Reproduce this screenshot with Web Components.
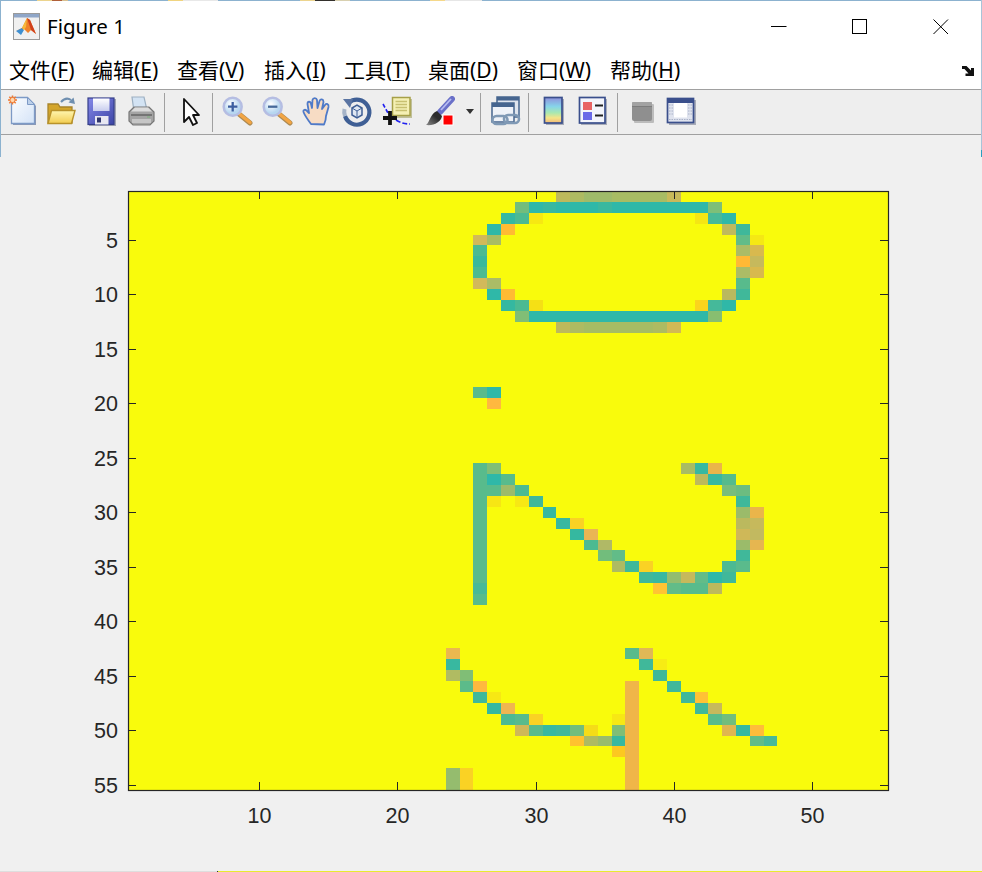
<!DOCTYPE html>
<html lang="zh"><head><meta charset="utf-8"><title>Figure 1</title>
<style>html,body{margin:0;padding:0;overflow:hidden;background:#f0f0f0}</style></head>
<body>
<fig-window>
  <title-bar slot="head">Figure 1</title-bar>
  <menu-bar slot="head">
    <menu-item label="文件" key="F" w="83"></menu-item>
    <menu-item label="编辑" key="E" w="85"></menu-item>
    <menu-item label="查看" key="V" w="87"></menu-item>
    <menu-item label="插入" key="I" w="80"></menu-item>
    <menu-item label="工具" key="T" w="84"></menu-item>
    <menu-item label="桌面" key="D" w="89"></menu-item>
    <menu-item label="窗口" key="W" w="93"></menu-item>
    <menu-item label="帮助" key="H" w="71"></menu-item>
  </menu-bar>
  <tool-bar slot="head"></tool-bar>
  <fig-axes></fig-axes>
</fig-window>
<script>
const BLUE='#8cb2cf';
class FigWindow extends HTMLElement{constructor(){super();this.attachShadow({mode:'open'}).innerHTML=`<style>
:host{display:flex;flex-direction:column;width:982px;height:872px;position:relative;overflow:hidden;background:#f0f0f0}
.top{height:1px;flex:none;background:linear-gradient(90deg,${BLUE} 0 37px,#ecd48e 37px 52px,#b0603a 52px 62px,#d8c090 62px 68px,${BLUE} 68px 168px,#f0d480 168px 183px,#e8e8e8 183px 218px,${BLUE} 218px 300px,#ecd48e 300px 315px,#33302c 315px 335px,#d8d0b0 335px 350px,${BLUE} 350px 430px,#f5d88a 430px 445px,#e6e6e6 445px 482px,${BLUE} 482px)}
.bottom{height:1px;flex:none;background:linear-gradient(90deg,#dedede 0 217px,#333 217px 218px,#e9ea30 218px)}
main{flex:1;min-height:0;display:flex}
.l,.r{position:absolute;width:1px;top:0;height:157px;background:${BLUE}}.l{left:0}.r{right:0;background:linear-gradient(180deg,#a8c4d8 0 150px,#2a9fc0 150px)}
</style><div class="top"></div><slot name="head"></slot><main><slot></slot></main><div class="bottom"></div><div class="l"></div><div class="r"></div>`}}
customElements.define('fig-window',FigWindow);

class TitleBar extends HTMLElement{constructor(){super();this.attachShadow({mode:'open'}).innerHTML=`<style>
:host{display:flex;align-items:center;height:51px;flex:none;padding-right:1px;background:#fff;color:#000;font:20.5px "Noto Sans","Noto Sans CJK SC",sans-serif}
.ic{margin:0 7px 0 13px;width:27px;height:27px;flex:none}
.t{flex:1;position:relative;top:-1px}
.b{width:81px;height:51px;display:flex;align-items:center;justify-content:center;flex:none}
</style>
<svg class="ic" viewBox="0 0 27 27"><rect x=".5" y=".5" width="26" height="26" fill="#f0f0f0" stroke="#9a9a9a"/><rect x="1" y="1" width="25" height="3.5" fill="#8fa6c8"/>
<path d="M3 18l6-3 5-10 3 2 6 14-5-4-3 3-4-4z" fill="#f0822a"/><path d="M14 5l3 2 6 14-5-4z" fill="#d0401e"/><path d="M3 18l6-3 2 2-3 5z" fill="#3f8fd0"/><path d="M9 15l5-10-1 9-2 3z" fill="#f5b83a"/></svg>
<span class="t"><slot></slot></span>
<span class="b"><svg width="16" height="16"><path d="M0 7.5h15.5" stroke="#000"/></svg></span>
<span class="b"><svg width="16" height="16"><rect x=".5" y=".5" width="14" height="14" fill="none" stroke="#000"/></svg></span>
<span class="b"><svg width="16" height="16"><path d="M.5.5l14.5 14.5M15 .5L.5 15" stroke="#000" stroke-width="1"/></svg></span>`}}
customElements.define('title-bar',TitleBar);

class MenuBar extends HTMLElement{constructor(){super();this.attachShadow({mode:'open'}).innerHTML=`<style>
:host{display:flex;align-items:center;height:37px;flex:none;background:#fff;border-bottom:1px solid #a0a0a0;padding-left:9px;color:#000;font:21px "Noto Sans","Noto Sans CJK SC",sans-serif}
.m{display:flex;flex:1}
svg{margin:0 7px 0 0;flex:none}
</style><div class="m"><slot></slot></div>
<svg width="14" height="12" viewBox="0 0 14 12"><path d="M1 1H5.500L10 5.500V3H13V11H4.500V8.500H7.500L3.500 4H1Z" fill="#111"/></svg>`}}
customElements.define('menu-bar',MenuBar);

class MenuItem extends HTMLElement{constructor(){super();const l=this.getAttribute('label'),k=this.getAttribute('key'),w=this.getAttribute('w');this.attachShadow({mode:'open'}).innerHTML=`<style>:host{display:block;flex:none;width:${w}px;white-space:nowrap;line-height:37px}u{text-underline-offset:2px;text-decoration-thickness:1px}</style>${l}(<u>${k}</u>)`}}
customElements.define('menu-item',MenuItem);

const defs=`<defs>
<linearGradient id="pg" x1="0" y1="0" x2="1" y2="1"><stop offset="0" stop-color="#fbfdff"/><stop offset="1" stop-color="#d4e3f7"/></linearGradient>
<linearGradient id="fg" x1="0" y1="0" x2="0" y2="1"><stop offset="0" stop-color="#fff6b0"/><stop offset="1" stop-color="#f2cc50"/></linearGradient>
<linearGradient id="dg" x1="0" y1="0" x2="1" y2="1"><stop offset="0" stop-color="#8487e8"/><stop offset="1" stop-color="#3c45a6"/></linearGradient>
<linearGradient id="lg" x1="0" y1="0" x2="0" y2="1"><stop offset="0" stop-color="#fff"/><stop offset="1" stop-color="#c8cdee"/></linearGradient>
<radialGradient id="gl" cx=".4" cy=".35"><stop offset="0" stop-color="#fff"/><stop offset="1" stop-color="#b6d6f0"/></radialGradient>
<linearGradient id="cb" x1="0" y1="0" x2="0" y2="1"><stop offset="0" stop-color="#8f90dc"/><stop offset=".35" stop-color="#86d4ea"/><stop offset=".6" stop-color="#a8e8b0"/><stop offset=".8" stop-color="#f5e488"/><stop offset="1" stop-color="#f0b878"/></linearGradient>
<linearGradient id="br" x1="0" y1="1" x2="1" y2="0"><stop offset="0" stop-color="#8a8a8a"/><stop offset=".6" stop-color="#2c2c2c"/></linearGradient>
</defs>`;
const ICONS={
new:`<path d="M11 9H27L34 16V35H11Z" fill="#8c98b4"/><path d="M9.5 7.5H25.5L32.5 14.5V33.5H9.5Z" fill="url(#pg)" stroke="#7d9ac6" stroke-width="1.3"/><path d="M25.5 7.5V14.5H32.5Z" fill="#bcd0ea" stroke="#7d9ac6"/><path d="M10.5 5.5v9M6 10h9M7.3 6.8l6.4 6.4M13.7 6.8l-6.4 6.4" stroke="#ef7a32" stroke-width="1.5"/><circle cx="10.5" cy="10" r="2.6" fill="#ffd9b0" stroke="#ef7a32"/>`,
open:`<path d="M6 33V14h10l2 3h12v16z" fill="#d4a52a" stroke="#a8842a" stroke-width="1.3"/><path d="M6 33.5L9.5 20.5H33L29.5 33.5Z" fill="url(#fg)" stroke="#b8922a" stroke-width="1.4"/><path d="M19 12Q24 6.500 29 10" fill="none" stroke="#6f8fb0" stroke-width="2"/><path d="M26.500 12.500L33 14L31.500 7.500Z" fill="#6f8fb0"/>`,
save:`<rect x="7" y="9" width="27" height="27" fill="#a2a6b4"/><rect x="6" y="8" width="26" height="26.500" fill="url(#dg)" stroke="#353f8a" stroke-width="1.200"/><rect x="11" y="8.500" width="16.500" height="12.500" fill="url(#lg)"/><rect x="13" y="26" width="13.500" height="8.500" fill="#e8e8f2"/><rect x="15" y="27.500" width="4" height="5" fill="#2f356c"/>`,
print:`<path d="M10 7H22L24.500 18H11.500Z" fill="#d3e3f3" stroke="#9db0c2" stroke-width="1.200"/><path d="M7 22L12 17H27L32 22V31L28 35H11L7 31Z" fill="#a4a4a4" stroke="#787878" stroke-width="1.200"/><path d="M9 21.500L13 17.500H26L30 21.500Z" fill="#dcdcdc"/><path d="M9 25H30" stroke="#666" stroke-width="1.500"/><path d="M10 29H29V33H10Z" fill="#c6c6c6"/><path d="M25 27h3" stroke="#7bb07b"/>`,
arrow:`<path d="M13 9L13 32L18 27L22 35L26 33L22 25L28 25Z" fill="#fff" stroke="#111" stroke-width="1.800" stroke-linejoin="round"/>`,
zin:`<path d="M22 24L33 33" stroke="#ad8a52" stroke-width="5" stroke-linecap="round"/><path d="M22.500 24L33 32.500" stroke="#f2a544" stroke-width="3.500" stroke-linecap="round"/><circle cx="15.700" cy="16.700" r="9" fill="url(#gl)" stroke="#b5bde2" stroke-width="2.500"/><path d="M11 16.700h9.400M15.700 12v9.400" stroke="#3c5fa0" stroke-width="2.300"/>`,
zout:`<path d="M22 24L33 33" stroke="#ad8a52" stroke-width="5" stroke-linecap="round"/><path d="M22.500 24L33 32.500" stroke="#f2a544" stroke-width="3.500" stroke-linecap="round"/><circle cx="15.700" cy="16.700" r="9" fill="url(#gl)" stroke="#b5bde2" stroke-width="2.500"/><path d="M11 16.700h9.400" stroke="#466a9a" stroke-width="2.300"/>`,
hand:`<path d="M14 34C11 30 8 26 6.500 22C6 19.500 8.500 19 10 21L12 23L10.500 14C10.500 11 13.500 11 14 14L15 18L15.500 10C16 7.500 19.500 7.500 20 10L20.500 18L22.500 11C23.500 8.500 26.500 9 26.500 12L25 19L28 15C29.500 13 32 14 31.500 17L29 26C29 30 28 32 27 34.500Z" fill="#f7dcc4" stroke="#4f7ac8" stroke-width="1.800" stroke-linejoin="round"/>`,
rotate:`<path d="M12 12.500A12.500 12.500 0 1 1 8 26" fill="none" stroke="#3f5f95" stroke-width="4.200"/><path d="M8 26A12.500 12.500 0 0 1 7.500 19" fill="none" stroke="#a6b4c8" stroke-width="4"/><path d="M6 9L16 9L13 18Z" fill="#5a74a2"/><path d="M15 18L20 15L25 18V25L20 28L15 25Z" fill="#dfe7f2" stroke="#3f5f95" stroke-width="1.500"/><path d="M15 18L20 21L25 18M20 21V28" fill="none" stroke="#3f5f95" stroke-width="1"/>`,
cursor:`<rect x="17" y="9" width="18" height="19" fill="#c0c09a"/><rect x="15.500" y="7.500" width="17.500" height="18" fill="#f5f0b4" stroke="#a6a048" stroke-width="1.500"/><path d="M18.500 11.500h11.500M18.500 14.500h11.500M18.500 17.500h11.500M18.500 20.500h11.500" stroke="#c8c070" stroke-width="1.300"/><path d="M6 14L11 23" stroke="#2222f0" stroke-width="1.600" stroke-dasharray="4 2"/><path d="M19 30Q25 34 33 34" fill="none" stroke="#2222f0" stroke-width="1.600" stroke-dasharray="5 2"/><path d="M13 21v14M6 28h14" stroke="#111" stroke-width="3.800"/>`,
brush:`<path d="M35 9L23 22" stroke="#6a70c8" stroke-width="6" stroke-linecap="round"/><path d="M34 9L24 20" stroke="#b6bcf2" stroke-width="1.800"/><path d="M20 21L25 26C24 32 17 36 9 35C13 32 13 24 20 21Z" fill="url(#br)"/><rect x="26" y="25" width="10" height="10" fill="#f00" stroke="#fff"/>`,
link:`<rect x="8" y="7" width="22" height="20" fill="#dfe5ee" stroke="#46658f" stroke-width="1.500"/><rect x="8" y="7" width="22" height="3.500" fill="#46658f"/><rect x="3" y="13" width="22" height="19" fill="#eef2f8" stroke="#46658f" stroke-width="1.500"/><rect x="3" y="13" width="22" height="4" fill="#46658f"/><rect x="3.500" y="26" width="15" height="8" rx="4" fill="none" stroke="#7f99b5" stroke-width="2.600"/><rect x="15" y="25" width="15" height="8" rx="4" fill="none" stroke="#7f99b5" stroke-width="2.600"/>`,
cbar:`<rect x="12" y="9" width="18" height="26" fill="#a8acb8"/><rect x="10.500" y="7.500" width="17.500" height="25.500" fill="url(#cb)" stroke="#3a4f8c" stroke-width="1.700"/>`,
legend:`<rect x="7" y="9" width="26" height="26" fill="#a8acb8"/><rect x="5.500" y="7.500" width="25.500" height="25.500" fill="#f3f5fb" stroke="#3a4f8c" stroke-width="1.700"/><rect x="9" y="12" width="9" height="8" fill="#e86464"/><rect x="9" y="22" width="9" height="8" fill="#6a6ae8"/><path d="M21 15.500h8M21 25.500h8" stroke="#222" stroke-width="1.800"/>`,
hide:`<rect x="12" y="14" width="20" height="19" rx="1" fill="#bcbcbc"/><rect x="10" y="12" width="20" height="19" rx="2" fill="#8f8f8f"/><rect x="10" y="12" width="20" height="4" rx="1" fill="#a2a2a2"/><path d="M10 16.500h20" stroke="#7c7c7c"/>`,
show:`<rect x="7" y="10" width="27" height="25" fill="#a8acb8"/><rect x="5.500" y="8.500" width="26" height="24" fill="#dfe3ee" stroke="#3a4f8c" stroke-width="1.700"/><rect x="5.500" y="8.500" width="26" height="4.500" fill="#3a4f8c"/><rect x="12" y="13" width="13" height="14.500" fill="#fff"/><path d="M7 15h4M7 18h4M7 21h4M7 24h4M26 15h4M26 18h4M26 21h4M26 24h4M7 29.500h23" stroke="#aab2c8" stroke-dasharray="1.500 1"/>`
};
class ToolBar extends HTMLElement{constructor(){super();
const seq=[['new',40],['open',40],['save',40],['print',40],'s2,6',['arrow',40],'s1,4',['zin',40],['zout',40],['hand',40],['rotate',40],['cursor',40],['brush',40],'d','s0,8',['link',39],'s0,5',['cbar',40],['legend',40],'s3,4',['hide',40],['show',40]];
let h='';for(const it of seq){
 if(Array.isArray(it))h+=`<svg class="i" width="${it[1]}" height="44" viewBox="0 0 ${it[1]} 44">${ICONS[it[0]]}</svg>`;
 else if(it==='d')h+=`<svg class="i d" width="23" height="44" viewBox="0 0 23 44"><path d="M9 19h8l-4 5z" fill="#333"/></svg>`;
 else{const[a,b]=it.slice(1).split(',');h+=`<span class="s" style="margin:0 ${b}px 0 ${a}px"></span>`}
}
this.attachShadow({mode:'open'}).innerHTML=`<style>
:host{display:flex;align-items:center;height:44px;flex:none;padding-left:2px;background:#eee;border-bottom:1px solid #a0a0a0}
.i{flex:none;display:block;filter:blur(.45px)}.d{filter:none}
.s{flex:none;width:1px;height:39px;background:#a0a0a0}
.defs{position:absolute;width:0;height:0}
</style><svg class="defs">${defs}</svg>${h}`}}
customElements.define('tool-bar',ToolBar);

const T='#2fb8a8',K='#58bb8c';
/* row: [column,colour,...] */
const CELLS={
1:[32,'#bdb95c',33,'#aebb62',34,'#9fbb6a',35,'#9fbb6a',36,'#a8bc64',37,'#a8bc64',38,'#a8bc64',39,'#a8bc64',40,'#c8b95a'],
2:[29,'#72bd7c',30,T,31,'#38b8a0',32,T,33,T,34,T,35,'#3ab89f',36,T,37,T,38,T,39,T,40,T,41,T,42,T,43,'#7dbf78'],
3:[28,'#35b8a0',29,'#4cba92',30,'#f7e812',42,'#f5e614',43,'#48b998',44,T],
4:[27,T,28,'#ffbb33',44,'#bfba5c',45,'#3fb89a'],
5:[26,'#d2b95a',27,'#a8bc64',45,'#62bc88',46,'#f5e814'],
6:[26,'#4cba92',45,'#abbc66',46,'#d8b94e'],
7:[26,'#3bb89c',45,'#ffb935',46,'#c6b95c'],
8:[26,'#4cba92',45,'#abbc66',46,'#d8b94e'],
9:[26,'#d2b95a',27,'#abbc66',45,K],
10:[27,T,28,'#ffbb33',44,'#bab95e',45,'#40b89a'],
11:[28,'#35b8a0',29,'#4cba92',30,'#f5e015',42,'#fbd41d',43,'#45b99a',44,T],
12:[29,'#80be76',30,T,31,T,32,T,33,T,34,T,35,T,36,T,37,T,38,T,39,T,40,T,41,T,42,T,43,'#88be70'],
13:[32,'#bdb95c',33,'#aebb62',34,'#a6bc64',35,'#a6bc64',36,'#a6bc64',37,'#a6bc64',38,'#a6bc64',39,'#adbb62',40,'#d2b955'],
19:[26,K,27,T],
20:[27,'#ffb83f'],
26:[26,K,27,'#80be76',41,'#a8bc64',42,'#38b8a0',43,'#eab54a'],
27:[26,K,27,T,28,K,42,'#bdb95c',43,'#38b8a0',44,'#55bb8c'],
28:[26,K,27,K,28,'#9dbb6a',29,'#4cba92',44,'#78bd7c',45,'#6cbc80'],
29:[26,K,27,'#f7e614',29,'#f7e814',30,'#40b89a',45,'#3fb89a'],
30:[26,K,31,'#35b8a0',45,'#9bbb6a',46,'#eab54a'],
31:[26,K,32,'#38b8a0',33,'#fad224',45,'#bbb95e',46,'#c6b95c'],
32:[26,K,33,'#35b8a0',34,'#eab554',45,'#cfb858',46,'#c2b960'],
33:[26,K,34,'#4cba92',35,'#b0b966',45,'#9bbb6a',46,'#e6b650'],
34:[26,K,35,'#72bd7c',36,'#62bc88',45,'#40b89a'],
35:[26,K,36,'#aebb62',37,'#40b89a',38,'#fad224',44,'#4cba92',45,'#5abb8c'],
36:[26,K,38,'#40b89a',39,'#38b8a0',40,'#92bd70',41,'#c6b95c',42,'#62bc88',43,T,44,'#40b89a'],
37:[26,'#48b998',39,'#ffc433',40,'#62bc88',41,K,42,K,43,'#bdb95c'],
38:[26,K],
43:[24,'#eab84f',37,K,38,'#e0b856'],
44:[24,'#38b8a0',38,'#40b89a',39,'#f7ec14'],
45:[24,'#b0bb62',25,'#80be76',39,'#40b89a'],
46:[25,'#5cbb8a',26,'#ffb83f',37,'#f0b648',40,'#40b89a'],
47:[26,'#40b89a',27,'#f7e814',37,'#f0b648',41,'#40b89a',42,'#ffc235'],
48:[27,'#35b8a0',28,'#f0b650',37,'#f0b648',42,'#40b89a',43,'#c6b95c'],
49:[28,'#4cba92',29,K,30,'#fad224',36,'#f7e814',37,'#f0b648',43,K,44,'#72bd7c'],
50:[29,'#cfb858',30,K,31,'#38b8a0',32,'#40b89a',33,'#72bd7c',34,'#f5dc18',36,'#80be76',37,'#f0b648',44,'#e0b650',45,'#35b8a0',46,'#ffbc3a'],
51:[33,'#ffc22f',34,'#aebb62',35,'#98bc6c',36,'#38b8a0',37,'#f0b648',46,'#62bc88',47,'#48b998'],
52:[36,'#fcc820',37,'#f0b648'],
53:[37,'#f0b648'],
54:[24,'#95bc6e',25,'#fad224',37,'#f0b648'],
55:[24,'#95bc6e',25,'#fad224',37,'#f0b648']
};
class FigAxes extends HTMLElement{constructor(){super();
const L=128,R=888,Y0=191,Y1=790,cw=(R-L)/55,ch=(Y1-Y0)/55;
const X=c=>Math.round(L+(c-1)*cw),Y=r=>Math.round(Y0+(r-1)*ch);
let s='';
for(const r in CELLS){const a=CELLS[r];for(let i=0;i<a.length;i+=2){const c=a[i];
 s+=`<rect x="${X(c)}" y="${Y(+r)}" width="${X(c+1)-X(c)}" height="${Y(+r+1)-Y(+r)}" fill="${a[i+1]}"/>`}}
let t='',lb='';
for(let v=10;v<=50;v+=10){const x=Math.round(L+(v-.5)*cw)+.5;
 t+=`M${x} ${Y1}v-8M${x} ${Y0}v8`;lb+=`<text x="${x}" y="823" text-anchor="middle">${v}</text>`}
for(let v=5;v<=55;v+=5){const y=Math.round(Y0+(v-.5)*ch)+.5;
 t+=`M${L} ${y}h8M${R} ${y}h-8`;lb+=`<text x="118" y="${y+7.5}" text-anchor="end">${v}</text>`}
this.attachShadow({mode:'open'}).innerHTML=`<style>:host{display:block;flex:1;background:#f0f0f0}svg{display:block}
text{font:21.5px "Liberation Sans",Arial,sans-serif;fill:#262626}</style>
<svg width="982" height="736" viewBox="0 135 982 736">
<rect x="${L}" y="${Y0}" width="${R-L}" height="${Y1-Y0}" fill="#f9fb0c"/>
<g shape-rendering="crispEdges">${s}</g>
<path d="${t}" stroke="#262626" stroke-width="1" fill="none" shape-rendering="crispEdges"/>
<rect x="${L+.5}" y="${Y0+.5}" width="${R-L}" height="${Y1-Y0}" fill="none" stroke="#262626" stroke-width="1.2"/>
${lb}</svg>`}}
customElements.define('fig-axes',FigAxes);
</script>
</body></html>
